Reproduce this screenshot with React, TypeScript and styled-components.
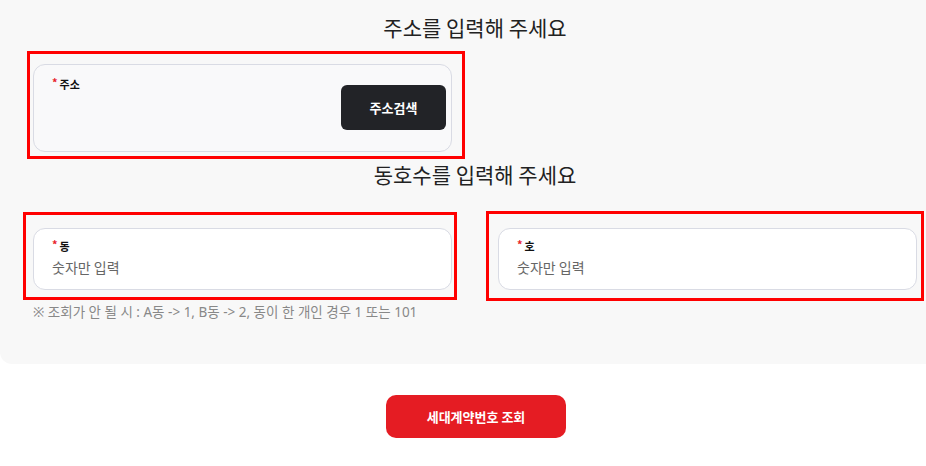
import styled, { createGlobalStyle } from 'styled-components';

const GlobalStyle = createGlobalStyle`
  html, body {
    margin: 0;
    padding: 0;
    background: #ffffff;
    overflow: hidden;
  }
  body {
    font-family: "Noto Sans CJK KR", "Noto Sans", sans-serif;
    color: #222222;
  }
`;

const Page = styled.div`
  width: 952px;
`;

const Panel = styled.section`
  box-sizing: border-box;
  padding: 12px 35px 43px 33px;
  background: #f8f8f8;
  border-radius: 0 0 12px 12px;
`;

const Title = styled.h2`
  margin: 0;
  font-size: 21px;
  line-height: 30px;
  font-weight: 400;
  color: #222222;
  text-align: center;
`;

const Section = styled.div<{ $gap: number }>`
  margin-top: ${(p) => p.$gap}px;
`;

const Grid = styled.div`
  display: grid;
  grid-template-columns: 1fr 1fr;
  column-gap: 46px;
`;

const Annotated = styled.div`
  position: relative;
`;

const Marker = styled.span<{ $t: number; $r: number; $b: number; $l: number }>`
  position: absolute;
  top: ${(p) => -p.$t}px;
  right: ${(p) => -p.$r}px;
  bottom: ${(p) => -p.$b}px;
  left: ${(p) => -p.$l}px;
  border: 3px solid #ff0000;
  pointer-events: none;
`;

const Card = styled.div<{ $white?: boolean }>`
  box-sizing: border-box;
  border: 1px solid #d9dbe4;
  border-radius: 12px;
  background: ${(p) => (p.$white ? '#ffffff' : '#f9f9fa')};
`;

const AddressCard = styled(Card)`
  height: 88px;
  display: flex;
  justify-content: space-between;
  align-items: flex-start;
  padding: 12px 5px 0 18px;
`;

const FieldCard = styled(Card)`
  height: 62px;
  padding: 10px 18px 0;
`;

const Label = styled.div`
  display: flex;
  align-items: flex-start;
  font-size: 11px;
  line-height: 14px;
  font-weight: 700;
  color: #111111;
`;

const Required = styled.span`
  color: #e8232a;
  font-size: 11px;
  line-height: 10px;
  margin-right: 2px;
`;

const Input = styled.input`
  display: block;
  width: 100%;
  margin-top: 4px;
  padding: 0;
  border: none;
  outline: none;
  background: transparent;
  font-family: "Noto Sans CJK KR", "Noto Sans", sans-serif;
  font-size: 14px;
  line-height: 20px;
  height: 20px;
  color: #222222;

  &::placeholder {
    color: #666666;
  }
`;

const DarkButton = styled.button`
  margin-top: 8px;
  width: 105px;
  height: 45px;
  border: none;
  border-radius: 6px;
  background: #222327;
  color: #ffffff;
  font-family: "Noto Sans CJK KR", "Noto Sans", sans-serif;
  font-size: 13px;
  font-weight: 700;
  cursor: pointer;
`;

const Hint = styled.p`
  margin: 13px 0 0;
  font-family: "Noto Sans", "Noto Sans CJK KR", sans-serif;
  font-size: 13.5px;
  line-height: 18px;
  color: #888888;
`;

const Footer = styled.div`
  display: flex;
  justify-content: center;
  padding-top: 31px;
`;

const SubmitButton = styled.button`
  width: 180px;
  height: 43px;
  border: none;
  border-radius: 10px;
  background: #e51c23;
  color: #ffffff;
  font-family: "Noto Sans CJK KR", "Noto Sans", sans-serif;
  font-size: 13px;
  font-weight: 700;
  cursor: pointer;
`;

const App = () => {
  return (
    <Page>
      <GlobalStyle />
      <Panel>
        <Title>주소를 입력해 주세요</Title>
        <Section $gap={22}>
          <Grid>
            <Annotated>
              <AddressCard>
                <Label>
                  <Required>*</Required>주소
                </Label>
                <DarkButton type="button">주소검색</DarkButton>
              </AddressCard>
              <Marker $t={13} $r={13} $b={7} $l={6} />
            </Annotated>
          </Grid>
        </Section>
        <Section $gap={7}>
          <Title>동호수를 입력해 주세요</Title>
        </Section>
        <Section $gap={39}>
          <Grid>
            <Annotated>
              <FieldCard $white>
                <Label>
                  <Required>*</Required>동
                </Label>
                <Input placeholder="숫자만 입력" />
              </FieldCard>
              <Marker $t={16} $r={5} $b={10} $l={10} />
            </Annotated>
            <Annotated>
              <FieldCard $white>
                <Label>
                  <Required>*</Required>호
                </Label>
                <Input placeholder="숫자만 입력" />
              </FieldCard>
              <Marker $t={17} $r={7} $b={11} $l={12} />
            </Annotated>
          </Grid>
          <Hint>※ 조회가 안 될 시 : A동 -&gt; 1, B동 -&gt; 2, 동이 한 개인 경우 1 또는 101</Hint>
        </Section>
      </Panel>
      <Footer>
        <SubmitButton type="button">세대계약번호 조회</SubmitButton>
      </Footer>
    </Page>
  );
};

export default App;
